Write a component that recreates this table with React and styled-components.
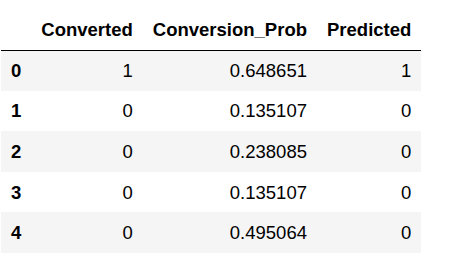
import React from 'react';
import styled, { createGlobalStyle } from 'styled-components';

const GlobalStyle = createGlobalStyle`
  body {
    margin: 0;
    background: #fff;
    font-family: "Liberation Sans", Arial, sans-serif;
  }
`;

const Frame = styled.div`
  padding-left: 1px;
`;

const Table = styled.table`
  border-collapse: collapse;
  border-spacing: 0;
  font-size: 18.5px;
  color: #000;
`;

const HeadCell = styled.th`
  height: 50px;
  box-sizing: border-box;
  padding: 0 10px 10px;
  vertical-align: bottom;
  text-align: right;
  font-weight: bold;
  line-height: 21px;
  white-space: nowrap;
  border-bottom: 1px solid #000;
`;

const Row = styled.tr`
  background: ${(p) => (p.$striped ? '#f5f5f5' : '#fff')};
`;

const IndexCell = styled.th`
  height: 40.6px;
  box-sizing: border-box;
  padding: 0 10px;
  text-align: left;
  font-weight: bold;
  line-height: 21px;
`;

const Cell = styled.td`
  height: 40.6px;
  box-sizing: border-box;
  padding: 0 10px;
  text-align: right;
  line-height: 21px;
`;

const columns = ['Converted', 'Conversion_Prob', 'Predicted'];

const rows = [
  [1, '0.648651', 1],
  [0, '0.135107', 0],
  [0, '0.238085', 0],
  [0, '0.135107', 0],
  [0, '0.495064', 0],
];

export default function App() {
  return (
    <>
      <GlobalStyle />
      <Frame>
        <Table>
          <thead>
            <tr>
              <HeadCell />
              {columns.map((c) => (
                <HeadCell key={c}>{c}</HeadCell>
              ))}
            </tr>
          </thead>
          <tbody>
            {rows.map((r, i) => (
              <Row key={i} $striped={i % 2 === 0}>
                <IndexCell>{i}</IndexCell>
                {r.map((v, j) => (
                  <Cell key={j}>{v}</Cell>
                ))}
              </Row>
            ))}
          </tbody>
        </Table>
      </Frame>
    </>
  );
}
